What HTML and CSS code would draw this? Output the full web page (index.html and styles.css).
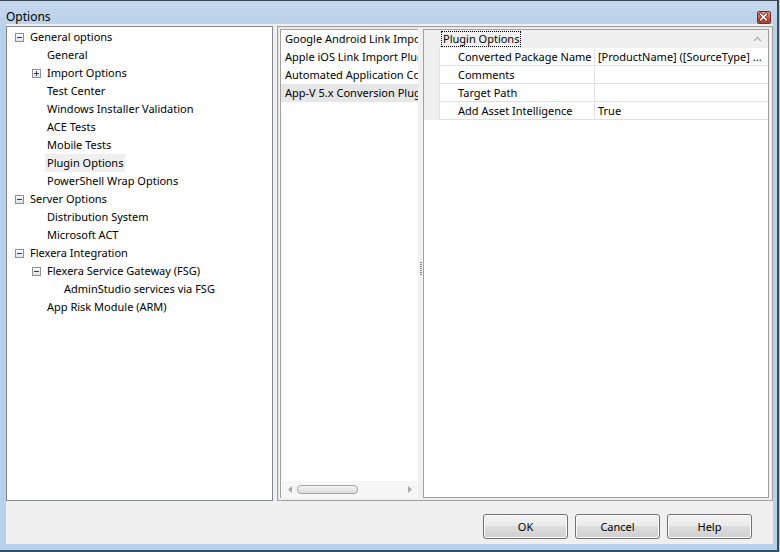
FILE: index.html
```html
<!DOCTYPE html>
<html lang="en">
<head>
    <meta charset="UTF-8" />
    <title>Options</title>
    <link rel="stylesheet" href="styles.css">
</head>
<body>
    <div class="window">
        <div class="titlebar">
            <div class="title">Options</div>
            <div class="close-btn">
                <svg width="14" height="13" viewBox="0 0 14 13">
                    <path d="M4 3 L10 9 M10 3 L4 9" stroke="#5a1a14" stroke-width="3.4" stroke-linecap="square"/>
                    <path d="M4 3 L10 9 M10 3 L4 9" stroke="#ffffff" stroke-width="1.8" stroke-linecap="square"/>
                </svg>
            </div>
        </div>

        <div class="client">
            <div class="panes">
                <div class="tree">
                    <div class="node lvl0"><span class="exp minus"></span>General options</div>
                    <div class="node lvl1">General</div>
                    <div class="node lvl1"><span class="exp plus"></span>Import Options</div>
                    <div class="node lvl1">Test Center</div>
                    <div class="node lvl1">Windows Installer Validation</div>
                    <div class="node lvl1">ACE Tests</div>
                    <div class="node lvl1">Mobile Tests</div>
                    <div class="node lvl1"><span class="sel">Plugin Options</span></div>
                    <div class="node lvl1">PowerShell Wrap Options</div>
                    <div class="node lvl0"><span class="exp minus"></span>Server Options</div>
                    <div class="node lvl1">Distribution System</div>
                    <div class="node lvl1">Microsoft ACT</div>
                    <div class="node lvl0"><span class="exp minus"></span>Flexera Integration</div>
                    <div class="node lvl1"><span class="exp minus"></span>Flexera Service Gateway (FSG)</div>
                    <div class="node lvl2">AdminStudio services via FSG</div>
                    <div class="node lvl1">App Risk Module (ARM)</div>
                </div>

                <div class="split">
                    <div class="list">
                        <div class="items">
                            <div class="item">Google Android Link Import Plugin</div>
                            <div class="item">Apple iOS Link Import Plugin</div>
                            <div class="item">Automated Application Converter</div>
                            <div class="item selected">App-V 5.x Conversion Plugin</div>
                        </div>
                        <div class="hscroll">
                            <svg width="5" height="7" viewBox="0 0 5 7"><path d="M4 0 L0 3.5 L4 7 Z" fill="#a8a8a8"/></svg>
                            <div class="track"><div class="thumb"></div></div>
                            <svg width="5" height="7" viewBox="0 0 5 7"><path d="M1 0 L5 3.5 L1 7 Z" fill="#a8a8a8"/></svg>
                        </div>
                    </div>

                    <div class="splitter"><div class="grip"></div></div>

                    <div class="propgrid">
                        <div class="category">
                            <span class="cat-name">Plugin Options</span>
                            <svg class="chev" width="9" height="6" viewBox="0 0 9 6"><path d="M1 5 L4.5 1.5 L8 5" fill="none" stroke="#b0b0b0" stroke-width="1.4"/></svg>
                        </div>
                        <div class="prop"><div class="margin"></div><div class="label">Converted Package Name</div><div class="value">[ProductName] ([SourceType] ...</div></div>
                        <div class="prop"><div class="margin"></div><div class="label">Comments</div><div class="value"></div></div>
                        <div class="prop"><div class="margin"></div><div class="label">Target Path</div><div class="value"></div></div>
                        <div class="prop"><div class="margin"></div><div class="label">Add Asset Intelligence</div><div class="value">True</div></div>
                    </div>
                </div>
            </div>

            <div class="buttons">
                <button class="btn">OK</button>
                <button class="btn">Cancel</button>
                <button class="btn">Help</button>
            </div>
        </div>
    </div>
</body>
</html>
```

FILE: styles.css
```css
body {
    margin: 0;
    font-family: "Noto Sans", sans-serif;
    font-size: 11px;
    color: #000;
    background: #bcd3ea;
}

.window {
    width: 777px;
    height: 549px;
    border-top: 1px solid #3c4650;
    border-right: 2px solid #3a4852;
    border-bottom: 2px solid #2d5664;
    background: linear-gradient(#c4d8ed, #b8d0e9 30px);
    display: flex;
    flex-direction: column;
    overflow: hidden;
}

.titlebar {
    height: 23px;
    display: flex;
    align-items: center;
    padding: 0 4px 0 6px;
    position: relative;
}

.title {
    font-size: 12px;
    padding-top: 7px;
}

.close-btn {
    position: absolute;
    right: 6px;
    top: 10px;
    width: 14px;
    height: 13px;
    border: 1px solid #6b2c24;
    border-radius: 2px;
    background: linear-gradient(#e8a094, #c9584a 55%, #b84232);
    box-sizing: border-box;
    display: flex;
}

.close-btn svg {
    margin: -1px 0 0 -1px;
}

.client {
    margin: 0 4px 0 6px;
    height: 520px;
    background: #f0f0f0;
    display: flex;
    flex-direction: column;
}

.panes {
    display: flex;
    gap: 4px;
    padding-top: 2px;
    height: 475px;
}

.tree {
    flex: none;
    width: 265px;
    border: 1px solid #828790;
    background: #fff;
    padding-top: 1px;
}

.node {
    height: 18px;
    line-height: 18px;
    white-space: nowrap;
    position: relative;
}

.lvl0 { padding-left: 23px; }
.lvl1 { padding-left: 40px; }
.lvl2 { padding-left: 57px; }

.exp {
    position: absolute;
    top: 5px;
    width: 9px;
    height: 9px;
    box-sizing: border-box;
    border: 1px solid #8e8f8f;
    background: linear-gradient(#ffffff, #e1e4e8);
}

.lvl0 .exp { left: 8px; }
.lvl1 .exp { left: 25px; }

.exp::before {
    content: "";
    position: absolute;
    left: 1px;
    top: 3px;
    width: 5px;
    height: 1px;
    background: #2a3a5a;
}

.exp.plus::after {
    content: "";
    position: absolute;
    left: 3px;
    top: 1px;
    width: 1px;
    height: 5px;
    background: #2a3a5a;
}

.sel {
    background: #efefef;
    margin-left: -2px;
    padding: 0 2px;
    display: inline-block;
}

.split {
    flex: 1;
    min-width: 0;
    border: 1px solid #a0a0a0;
    box-shadow: inset 1px 1px 0 #e3e3e3;
    padding: 2px 3px 2px 2px;
    display: flex;
}

.list {
    flex: none;
    width: 137px;
    border-left: 1px solid #a0a0a0;
    border-top: 1px solid #a0a0a0;
    background: #fff;
    display: flex;
    flex-direction: column;
    overflow: hidden;
}

.items {
    flex: 1;
}

.item {
    height: 18px;
    line-height: 18px;
    padding-left: 4px;
    white-space: nowrap;
}

.item.selected {
    background: #e6e6e6;
}

.hscroll {
    height: 17px;
    background: #f6f6f6;
    display: flex;
    align-items: center;
    gap: 4px;
    padding: 0 6px 0 7px;
}

.track {
    flex: 1;
}

.thumb {
    width: 59px;
    height: 7px;
    border: 1px solid #a6a6a6;
    border-radius: 4px;
    background: linear-gradient(#f4f4f4, #dcdcdc);
}

.splitter {
    flex: none;
    width: 5px;
    display: flex;
    align-items: center;
    justify-content: center;
}

.grip {
    width: 2px;
    height: 14px;
    margin-top: 10px;
    background: repeating-linear-gradient(#8a8a8a 0 1px, transparent 1px 2px);
}

.propgrid {
    flex: 1;
    min-width: 0;
    border: 1px solid #a0a0a0;
    background: #fff;
}

.category {
    height: 18px;
    background: #f0f0f0;
    display: flex;
    align-items: center;
    justify-content: space-between;
    padding-left: 18px;
    padding-right: 6px;
}

.cat-name {
    line-height: 14px;
    outline: 1px dotted #000;
    padding: 0 1px;
}

.prop {
    height: 18px;
    display: flex;
    background: #f0f0f0;
}

.margin {
    flex: none;
    width: 15px;
}

.label, .value {
    background: #fff;
    border-bottom: 1px solid #e0e0e0;
    line-height: 17px;
    white-space: nowrap;
    overflow: hidden;
}

.label {
    flex: none;
    width: 136px;
    padding-left: 18px;
    border-left: 1px solid #e0e0e0;
    border-right: 1px solid #e0e0e0;
}

.value {
    flex: 1;
    min-width: 0;
    padding-left: 3px;
}

.buttons {
    display: flex;
    justify-content: flex-end;
    gap: 7px;
    padding: 13px 21px 0 0;
}

.btn {
    width: 85px;
    height: 25px;
    font-family: "Noto Sans", sans-serif;
    font-size: 11px;
    color: #000;
    border: 1px solid #707070;
    border-radius: 3px;
    background: linear-gradient(#f2f2f2 0, #ebebeb 50%, #dddddd 50%, #cfcfcf 100%);
    box-shadow: inset 0 0 0 1px #fcfcfc;
    padding: 0;
}
```
